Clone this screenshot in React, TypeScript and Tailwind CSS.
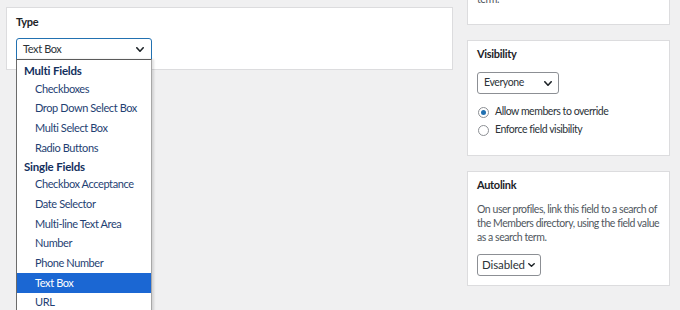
import React from "react";

const FONT = { fontFamily: "Lato, 'Noto Sans', sans-serif" };

function Chevron({ w = 8, h = 5, sw = 1.6 }: { w?: number; h?: number; sw?: number }) {
  return (
    <svg width={w} height={h} viewBox={`0 0 ${w} ${h}`} className="block">
      <path
        d={`M0.8 0.8 L${w / 2} ${h - 0.8} L${w - 0.8} 0.8`}
        stroke="#1d2327"
        strokeWidth={sw}
        fill="none"
        strokeLinecap="round"
        strokeLinejoin="round"
      />
    </svg>
  );
}

const multi = ["Checkboxes", "Drop Down Select Box", "Multi Select Box", "Radio Buttons"];
const single = [
  "Checkbox Acceptance",
  "Date Selector",
  "Multi-line Text Area",
  "Number",
  "Phone Number",
  "Text Box",
  "URL",
];

function Header({ children }: { children: React.ReactNode }) {
  return (
    <div className="h-[17px] flex items-center pl-[7px] text-[11.5px] tracking-[-0.2px] font-bold text-[#14305e]">
      {children}
    </div>
  );
}

function Item({ label, selected }: { label: string; selected?: boolean }) {
  return (
    <div
      className={
        "h-[19.7px] flex items-center pl-[18px] text-[11px] tracking-[-0.4px] " +
        (selected ? "bg-[#1b67d3] text-white" : "text-[#1f3f73]")
      }
    >
      {label}
    </div>
  );
}

function Radio({ checked, label }: { checked?: boolean; label: string }) {
  return (
    <div className="h-[18px] flex items-center">
      <span className="w-[11px] h-[11px] rounded-full border border-[#8c8f94] bg-white flex items-center justify-center ml-[1px]">
        {checked && <span className="w-[5px] h-[5px] rounded-full bg-[#2271b1]" />}
      </span>
      <span className="ml-[6px] text-[10.5px] tracking-[-0.45px] text-[#2c3338]">{label}</span>
    </div>
  );
}

export default function App() {
  return (
    <div className="w-[680px] h-[310px] bg-[#f0f0f1] overflow-hidden flex items-start" style={FONT}>
      {/* Left: Type panel */}
      <div className="ml-[6px] mt-[7px] w-[447px] h-[63px] bg-white border border-[#dcdcde] pl-[9px] pt-[6px] shrink-0">
        <div className="h-[16px] leading-[16px] text-[11px] tracking-[-0.3px] font-bold text-[#1d2327]">Type</div>
        <div className="relative mt-[8px] w-[136px]">
          <div className="h-[22px] border border-[#2271b1] rounded-t-[3px] bg-white flex items-center justify-between pl-[6px] pr-[7px]">
            <span className="text-[11px] tracking-[-0.4px] text-[#2c3338]">Text Box</span>
            <Chevron w={8} h={5} sw={1.6} />
          </div>
          <div className="absolute left-0 top-[21px] w-[136px] h-[260px] pt-[2px] bg-white border-t border-t-[#5a5a5a] border-l border-l-[#6b6b6b] border-r border-r-[#a7a7a7] shadow-[2px_0_2px_rgba(0,0,0,0.12)] z-10">
            <Header>Multi Fields</Header>
            {multi.map((m) => (
              <Item key={m} label={m} />
            ))}
            <Header>Single Fields</Header>
            {single.map((s) => (
              <Item key={s} label={s} selected={s === "Text Box"} />
            ))}
          </div>
        </div>
      </div>

      {/* Right column */}
      <div className="ml-[14px] w-[203px] shrink-0 flex flex-col">
        <div className="-mt-[30px] h-[55px] bg-white border border-[#dcdcde] pl-[9px] pt-[21px]">
          <div className="text-[10.5px] tracking-[-0.45px] leading-[14px] text-[#50575e]">term.</div>
        </div>

        <div className="mt-[15px] h-[116px] bg-white border border-[#dcdcde] pl-[9px] pt-[5px]">
          <div className="h-[16px] leading-[16px] text-[11px] tracking-[-0.3px] font-bold text-[#1d2327]">Visibility</div>
          <div className="mt-[10px] w-[82px] h-[22px] border border-[#8c8f94] rounded-[3px] bg-white flex items-center justify-between pl-[6px] pr-[6px]">
            <span className="text-[10.5px] tracking-[-0.4px] text-[#2c3338]">Everyone</span>
            <Chevron w={8} h={5} sw={1.6} />
          </div>
          <div className="mt-[9px]">
            <Radio checked label="Allow members to override" />
            <Radio label="Enforce field visibility" />
          </div>
        </div>

        <div className="mt-[15px] h-[115px] bg-white border border-[#dcdcde] pl-[9px] pr-[6px] pt-[5px]">
          <div className="h-[16px] leading-[16px] text-[11px] tracking-[-0.3px] font-bold text-[#1d2327]">Autolink</div>
          <div className="mt-[9px] text-[10.5px] tracking-[-0.45px] leading-[14px] text-[#50575e]">
            On user profiles, link this field to a search of the Members directory, using the field value as a search term.
          </div>
          <div className="mt-[10px] w-[64px] h-[22px] border border-[#8c8f94] rounded-[3px] bg-white flex items-center justify-between pl-[4px] pr-[5px]">
            <span className="text-[11.5px] tracking-[-0.1px] text-[#2c3338]">Disabled</span>
            <Chevron w={7} h={4} sw={1.5} />
          </div>
        </div>
      </div>
    </div>
  );
}
